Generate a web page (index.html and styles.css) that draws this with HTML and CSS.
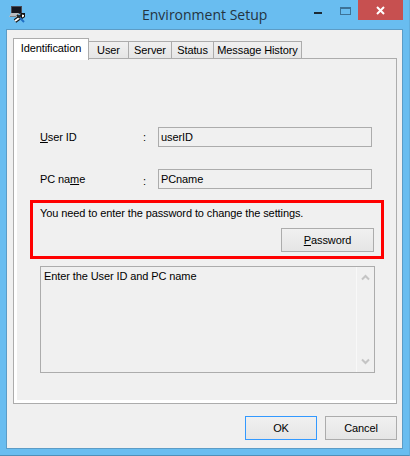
FILE: index.html
```html
<!DOCTYPE html>
<html lang="en">
<head>
  <meta charset="UTF-8" />
  <title>Environment Setup</title>
  <link rel="stylesheet" href="styles.css">
</head>
<body>
  <div class="window">
    <div class="titlebar">
      <svg class="app-icon" width="18" height="18" viewBox="0 0 18 18">
        <rect x="2" y="0" width="11" height="8" fill="#4a4a55" />
        <rect x="3" y="1" width="9" height="6" fill="#16161e" />
        <path d="M0 11 L2 7 H10 L8 11 Z" fill="#b9bcc0" />
        <path d="M1 10 H7 V11 H1 Z" fill="#7c7f84" />
        <path d="M6 15 L13 10" stroke="#111" stroke-width="4" />
        <path d="M6 15 L13 10" stroke="#fff" stroke-width="2" />
        <path d="M12 7 L16 7 L16 11 L13 13 L11 11 Z" fill="#111" />
        <path d="M13 8.5 L15 9 L15 10.5 L13 11.5 Z" fill="#fff" />
        <path d="M8 9 L11 12" stroke="#222" stroke-width="2" />
        <path d="M11 12 L15 16" stroke="#1f6fc4" stroke-width="2" />
      </svg>
      <div class="title">Environment Setup</div>
      <div class="min-btn"></div>
      <div class="max-btn"></div>
      <div class="close-btn">
        <svg width="9" height="9" viewBox="0 0 9 9">
          <path d="M1 1 L8 8 M8 1 L1 8" stroke="#fff" stroke-width="2" />
        </svg>
      </div>
    </div>

    <div class="client">
      <div class="tabs">
        <div class="tab active">Identification</div>
        <div class="tab">User</div>
        <div class="tab">Server</div>
        <div class="tab">Status</div>
        <div class="tab">Message History</div>
      </div>

      <div class="panel">
        <div class="form-row">
          <label><u>U</u>ser ID</label>
          <span>:</span>
          <input type="text" value="userID" readonly />
        </div>
        <div class="form-row">
          <label>PC na<u>m</u>e</label>
          <span class="colon-low">:</span>
          <input type="text" value="PCname" readonly />
        </div>

        <div class="password-box">
          <p>You need to enter the password to change the settings.</p>
          <button class="btn password-btn"><u>P</u>assword</button>
        </div>

        <div class="help-box">
          <div class="help-text">Enter the User ID and PC name</div>
          <div class="scrollbar">
            <svg width="9" height="7" viewBox="0 0 9 7">
              <path d="M1 5.5 L4.5 2 L8 5.5" fill="none" stroke="#c4c4c4" stroke-width="2" />
            </svg>
            <svg width="9" height="7" viewBox="0 0 9 7">
              <path d="M1 1.5 L4.5 5 L8 1.5" fill="none" stroke="#c4c4c4" stroke-width="2" />
            </svg>
          </div>
        </div>
      </div>

      <div class="footer">
        <button class="btn btn-default">OK</button>
        <button class="btn">Cancel</button>
      </div>
    </div>
  </div>
</body>
</html>
```

FILE: styles.css
```css
* {
  box-sizing: border-box;
  margin: 0;
  padding: 0;
}

body {
  font-family: 'Liberation Sans', Arial, sans-serif;
  font-size: 11px;
  letter-spacing: -0.1px;
  color: #000;
  background: #69bdf0;
}

.window {
  width: 410px;
  height: 456px;
  display: flex;
  flex-direction: column;
  background: #69bdf0;
  border-right: 1px solid #62aedd;
  border-bottom: 1px solid #4f8fb8;
}

/* title bar */
.titlebar {
  height: 29px;
  display: flex;
  align-items: flex-start;
  padding-right: 6px;
}

.app-icon {
  margin: 6px 0 0 9px;
}

.title {
  flex: 1;
  margin-top: 5px;
  padding-left: 115px;
  font-family: 'Open Sans', sans-serif;
  font-size: 14px;
  letter-spacing: 0;
  color: #24343f;
}

.min-btn {
  width: 8px;
  height: 2px;
  margin: 12px 18px 0 0;
  background: #1c2a35;
}

.max-btn {
  width: 11px;
  height: 8px;
  margin: 7px 7px 0 0;
  border: 1px solid #3d7296;
  border-top-width: 2px;
}

.close-btn {
  width: 45px;
  height: 20px;
  display: flex;
  justify-content: center;
  align-items: center;
  background: #c75050;
}

/* client area */
.client {
  flex: none;
  height: 420px;
  margin: 0 6px 0 6px;
  display: flex;
  flex-direction: column;
  background: #f0f0f0;
  border: 1px solid #5c9cc6;
  padding: 8px 5px 8px 6px;
}

.tabs {
  display: grid;
  grid-template-columns: 76px 40px 43px 42px 88px;
  align-items: end;
  height: 21px;
  margin-bottom: -1px;
}

.tab {
  height: 18px;
  line-height: 17px;
  text-align: center;
  white-space: nowrap;
  border: 1px solid #acacac;
  border-bottom: none;
  border-left-width: 0;
  background: linear-gradient(#f0f0f0, #e5e5e5);
}

.tab.active {
  position: relative;
  height: 22px;
  line-height: 19px;
  margin-bottom: -1px;
  border-left-width: 1px;
  background: #fff;
}

.panel {
  flex: 1;
  border: 1px solid #acacac;
  background: #f0f0f0;
  box-shadow: inset 3px -3px 0 #fff;
  padding: 68px 0 0 16px;
}

.form-row {
  display: grid;
  grid-template-columns: 103px 15px 214px;
  align-items: center;
  height: 20px;
  margin: 0 0 22px 10px;
}

.form-row input {
  width: 100%;
  height: 20px;
  padding: 0 2px;
  font: inherit;
  letter-spacing: inherit;
  color: #000;
  background: #f0f0f0;
  border: 1px solid #acacac;
  outline: none;
}

.colon-low {
  padding-top: 4px;
}

.password-box {
  width: 354px;
  height: 59px;
  margin-top: -11px;
  border: 3px solid #f00;
  padding: 3px 7px 0 7px;
  display: flex;
  flex-direction: column;
  align-items: flex-end;
}

.password-box p {
  align-self: flex-start;
  line-height: 14px;
}

.btn {
  width: 72px;
  height: 24px;
  font: inherit;
  letter-spacing: inherit;
  color: #000;
  border: 1px solid #acacac;
  background: linear-gradient(#f0f0f0, #e5e5e5);
}

.password-btn {
  width: 93px;
  margin-top: 8px;
}

.help-box {
  display: flex;
  width: 335px;
  height: 107px;
  margin: 7px 0 0 10px;
  border: 1px solid #acacac;
}

.help-text {
  flex: 1;
  padding: 2px 3px;
  line-height: 14px;
}

.scrollbar {
  width: 18px;
  display: flex;
  flex-direction: column;
  justify-content: space-between;
  align-items: center;
  padding: 7px 0;
  border-left: 1px solid #f8f8f8;
}

.scrollbar svg {
  display: block;
}

.footer {
  display: flex;
  justify-content: flex-end;
  gap: 8px;
  margin-top: 12px;
}

.btn-default {
  border-color: #3399ff;
}
```
